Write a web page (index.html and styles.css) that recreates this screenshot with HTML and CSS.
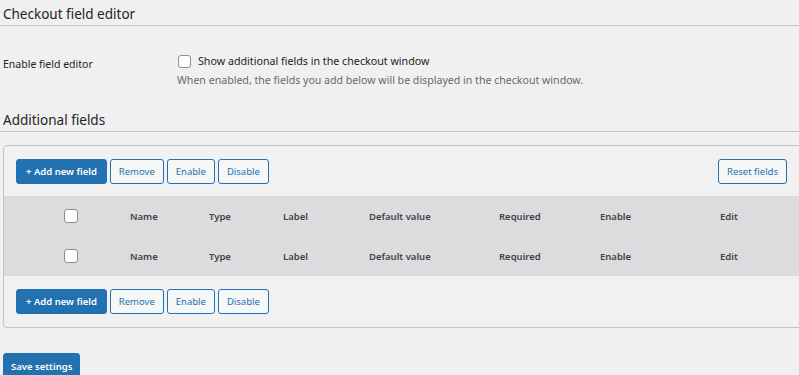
FILE: index.html
```html
<!DOCTYPE html>
<html lang="en">
<head>
<meta charset="utf-8">
<title>Checkout field editor</title>
<link rel="stylesheet" href="styles.css">
</head>
<body>
<div class="page">
  <h2 class="section-title">Checkout field editor</h2>
  <div class="setting-row">
    <div class="setting-label">Enable field editor</div>
    <div class="setting-field">
      <label class="check-label"><span class="checkbox"></span>Show additional fields in the checkout window</label>
      <p class="description">When enabled, the fields you add below will be displayed in the checkout window.</p>
    </div>
  </div>
  <h2 class="section-title second">Additional fields</h2>
  <div class="fields-box">
    <div class="toolbar">
      <div class="btn-group">
        <button class="btn primary">+ Add new field</button>
        <button class="btn">Remove</button>
        <button class="btn">Enable</button>
        <button class="btn">Disable</button>
      </div>
      <button class="btn">Reset fields</button>
    </div>
    <div class="fields-table">
      <div class="trow">
        <span></span><span class="checkbox"></span><span>Name</span><span>Type</span><span>Label</span><span>Default value</span><span>Required</span><span>Enable</span><span>Edit</span>
      </div>
      <div class="trow">
        <span></span><span class="checkbox"></span><span>Name</span><span>Type</span><span>Label</span><span>Default value</span><span>Required</span><span>Enable</span><span>Edit</span>
      </div>
    </div>
    <div class="toolbar bottom">
      <div class="btn-group">
        <button class="btn primary">+ Add new field</button>
        <button class="btn">Remove</button>
        <button class="btn">Enable</button>
        <button class="btn">Disable</button>
      </div>
    </div>
  </div>
  <button class="btn primary save">Save settings</button>
</div>
</body>
</html>
```
FILE: styles.css
```css
html, body {
  margin: 0;
  padding: 0;
  overflow: hidden;
  background: #f0f0f1;
}
body {
  font-family: "Noto Sans", "Open Sans", sans-serif;
  color: #1d2327;
}
.page {
  padding: 0 0 0 3px;
}
.section-title {
  margin: 0 0 0 -3px;
  padding: 5px 0 0 3px;
  height: 20px;
  font-size: 13.5px;
  font-weight: 400;
  line-height: 18px;
  color: #1d2327;
  border-bottom: 1px solid #c3c4c7;
}
.section-title.second {
  margin-top: 23px;
  padding-top: 1px;
  height: 20px;
}
.setting-row {
  display: flex;
  padding-top: 26px;
}
.setting-label {
  width: 174px;
  font-size: 10.5px;
  color: #1d2327;
  padding-top: 4px;
  line-height: 16px;
}
.setting-field {
  display: flex;
  flex-direction: column;
}
.check-label {
  display: flex;
  align-items: center;
  font-size: 10.7px;
  line-height: 14px;
  color: #1d2327;
  margin-top: 2px;
}
.checkbox {
  display: inline-block;
  width: 11px;
  height: 11px;
  border: 1px solid #8c8f94;
  border-radius: 3px;
  background: #fff;
  box-sizing: content-box;
}
.check-label .checkbox {
  margin: 0 7px 0 1px;
}
.description {
  margin: 5px 0 0;
  font-size: 10.6px;
  line-height: 14px;
  color: #646970;
}
.fields-box {
  margin-top: 13px;
  margin-right: -12px;
  border: 1px solid #c3c4c7;
  border-radius: 4px;
  background: #f1f1f1;
}
.toolbar {
  display: flex;
  justify-content: space-between;
  align-items: center;
  padding: 13px 23px 12px 12px;
}
.toolbar.bottom {
  padding: 13px 12px 13px 12px;
}
.btn-group {
  display: flex;
  gap: 3px;
}
.btn {
  height: 25px;
  padding: 0 8px;
  font-family: "Noto Sans", "Open Sans", sans-serif;
  font-size: 9.5px;
  line-height: 23px;
  color: #2271b1;
  background: #f6f7f7;
  border: 1px solid #2271b1;
  border-radius: 3px;
  cursor: pointer;
}
.btn.primary {
  background: #2271b1;
  color: #fff;
  font-weight: 600;
  padding: 0 9px;
}
.fields-table {
  background: #dcdcde;
}
.trow {
  display: grid;
  grid-template-columns: 60px 66px 79px 74px 86px 130px 101px 120px 1fr;
  height: 40px;
  align-items: center;
  font-size: 9.5px;
  font-weight: 600;
  color: #3c434a;
}
.trow .checkbox {
  width: 12px;
  height: 12px;
}
.btn.save {
  margin-top: 25px;
  height: 26px;
  padding: 0 7px;
}
```
